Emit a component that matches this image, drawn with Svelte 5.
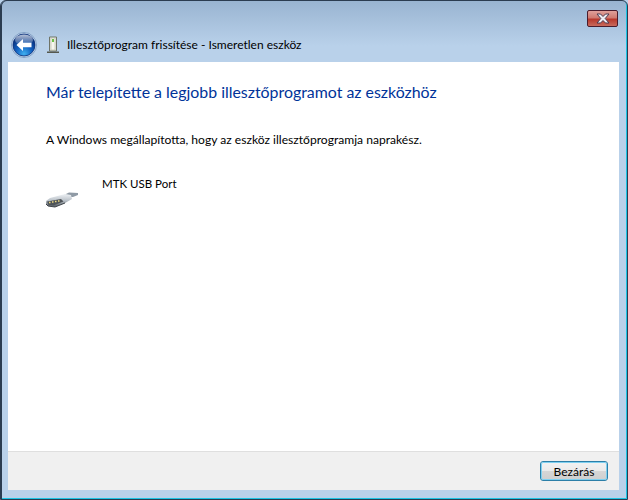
<script lang="ts">
	const TITLE = 'Illesztőprogram frissítése - Ismeretlen eszköz';
	const HEADING = 'Már telepítette a legjobb illesztőprogramot az eszközhöz';
	const MESSAGE = 'A Windows megállapította, hogy az eszköz illesztőprogramja naprakész.';
</script>

<div class="window">
	<div class="caption">
		<button class="close" aria-label="Bezárás">
			<svg width="16" height="11" viewBox="0 0 16 11">
				<path d="M2 1h3.500L8 3.500 10.500 1H14l-3.800 4.500L14 10h-3.500L8 7.500 5.500 10H2l3.800-4.500z" fill="#eeeef4" stroke="#4a3a50" stroke-width="1" />
			</svg>
		</button>
	</div>
	<div class="nav">
		<svg class="back" width="26" height="26" viewBox="0 0 26 26">
			<defs>
				<radialGradient id="orb" cx="50%" cy="90%" r="75%">
					<stop offset="0" stop-color="#3fb0f0" />
					<stop offset="0.5" stop-color="#1260c0" />
					<stop offset="1" stop-color="#07307c" />
				</radialGradient>
				<linearGradient id="gloss" x1="0" y1="0" x2="0" y2="1">
					<stop offset="0" stop-color="#fff" stop-opacity="0.7" />
					<stop offset="1" stop-color="#fff" stop-opacity="0.08" />
				</linearGradient>
			</defs>
			<circle cx="13" cy="13" r="12.500" fill="#c6d8ec" stroke="#5a7fae" stroke-width="0.6" />
			<circle cx="13" cy="13" r="11" fill="url(#orb)" stroke="#0a2f78" stroke-width="0.8" />
			<ellipse cx="13" cy="8" rx="9" ry="5.500" fill="url(#gloss)" />
			<path d="M5.500 13 12 7v3.800h8.500v4.400H12V19z" fill="#fff" />
		</svg>
		<svg class="device" width="16" height="18" viewBox="0 0 16 18">
			<path d="M4.500 1h7v14h-7z" fill="#e4e6da" stroke="#6f7468" />
			<path d="M6 2h4v12H6z" fill="#f6f6ee" stroke="#b5b8aa" stroke-width="0.6" />
			<path d="M7 3h2v3H7z" fill="#6cc04a" />
			<path d="M2 15.500h12V17H2z" fill="#55584f" />
		</svg>
		<span class="title">{TITLE}</span>
	</div>
	<div class="body">
		<main class="content">
			<h1>{HEADING}</h1>
			<p>{MESSAGE}</p>
			<div class="device-row">
				<svg class="port" width="34" height="18" viewBox="0 0 34 18">
					<defs>
						<linearGradient id="shell" x1="0" y1="0" x2="0" y2="1">
							<stop offset="0" stop-color="#f0f3f6" />
							<stop offset="0.55" stop-color="#b4bcc4" />
							<stop offset="1" stop-color="#4f555b" />
						</linearGradient>
					</defs>
					<path d="M19 4l5-2.500L33 2v2l-5 2-3 0z" fill="#8f9aa5" />
					<path d="M1 10l4-3L20 3l6 1 1 4-7 4-10 4-7-1-2-2z" fill="url(#shell)" />
					<path d="M2 10.500l14-2.500 2.500 2.500-10 4-5-.5z" fill="#4e5358" />
					<path d="M4 11.500h1.500M7 11h1.500M10 10.500h1.500M13 10h1.500" stroke="#efdc80" stroke-width="1.400" />
					<path d="M1 13l2 2 7 1 10-4" stroke="#40454a" fill="none" />
				</svg>
				<span class="device-name">MTK USB Port</span>
			</div>
		</main>
		<footer class="actions">
			<button class="primary">Bezárás</button>
		</footer>
	</div>
	<div class="bottom-edge"></div>
</div>

<style>
	:global(body) {
		margin: 0;
		background: #b9d1ea;
	}

	.window {
		display: flex;
		flex-direction: column;
		box-sizing: border-box;
		width: 628px;
		height: 500px;
		border: 1px solid #2b3c50;
		border-radius: 6px 6px 0 0;
		box-shadow: inset 1px 0 0 #2b3c50, inset -1px -1px 0 #1cc4e4;
		background: linear-gradient(#99b4d1 0, #b9d1ea 45px);
		font-family: Lato, 'Noto Sans', sans-serif;
		font-size: 12px;
		color: #000;
	}

	.caption {
		display: flex;
		justify-content: flex-end;
		height: 27px;
		padding-right: 9px;
	}

	.close {
		display: flex;
		align-items: center;
		justify-content: center;
		width: 31px;
		height: 17px;
		margin-top: 9px;
		padding: 0;
		border: 1px solid #4a1c2c;
		border-radius: 2px;
		background: linear-gradient(#e0a09a 0, #d07a70 45%, #b8382c 55%, #c86a5c 100%);
	}

	.nav {
		display: flex;
		align-items: center;
		height: 34px;
		padding-left: 10px;
	}

	.device {
		margin-left: 8px;
	}

	.title {
		margin-bottom: 2px;
		margin-left: 6px;
	}

	.body {
		display: flex;
		flex: 1;
		flex-direction: column;
		margin: 0 8px 0 7px;
		background: #fff;
	}

	.content {
		flex: 1;
		padding: 19px 38px 0;
	}

	h1 {
		margin: 0;
		color: #003399;
		font-size: 15.900px;
		font-weight: 400;
		line-height: 22px;
	}

	p {
		margin: 29px 0 0;
		font-size: 12.100px;
		line-height: 16px;
	}

	.device-row {
		display: flex;
		gap: 23px;
		margin-top: 28px;
	}

	.port {
		margin-top: 15px;
		margin-left: -1px;
	}

	.device-name {
		font-size: 11.500px;
		line-height: 16px;
	}

	.actions {
		display: flex;
		justify-content: flex-end;
		align-items: center;
		height: 39px;
		box-sizing: border-box;
		padding-right: 11px;
		border-top: 1px solid #dfdfdf;
		background: #f0f0f0;
	}

	.primary {
		box-sizing: border-box;
		width: 68px;
		height: 20px;
		padding: 0;
		border: 1px solid #2c7fa8;
		border-radius: 3px;
		outline: 1px solid #7fd0f0;
		outline-offset: -2px;
		background: linear-gradient(#f2f2f2 0, #ebebeb 48%, #d6d6d6 52%, #cfcfcf 100%);
		font: inherit;
		color: #000;
	}

	.bottom-edge {
		height: 9px;
	}
</style>
